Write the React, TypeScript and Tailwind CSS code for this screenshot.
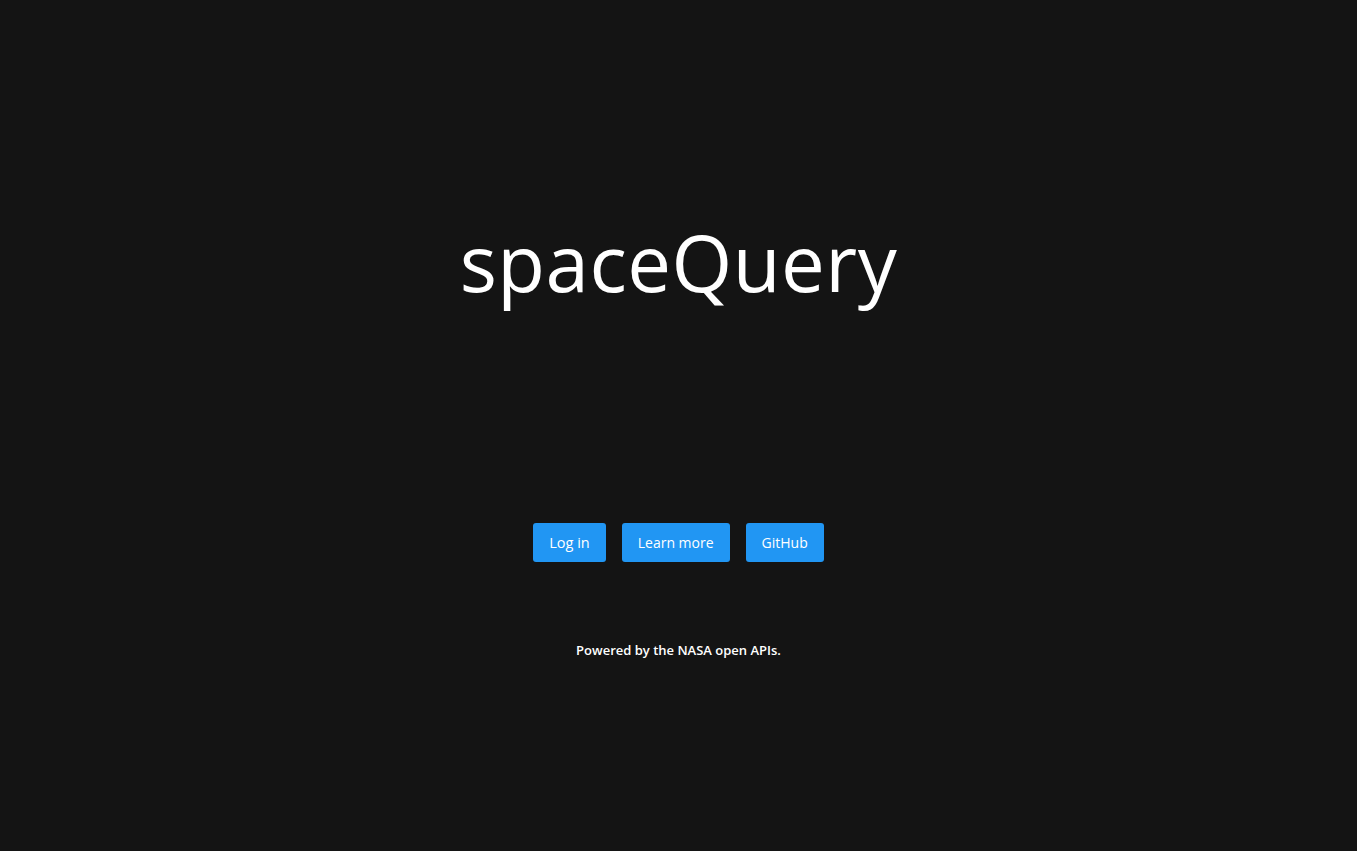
export default function App() {
  return (
    <div
      className="w-full h-[851px] bg-[#141414] flex flex-col items-center text-white"
      style={{ fontFamily: '"Open Sans", "Noto Sans", sans-serif' }}
    >
      <h1 className="mt-[212px] text-[78px] leading-[100px] font-normal tracking-[0.5px]">spaceQuery</h1>
      <div className="mt-[211px] flex gap-4">
        <button className="h-[39px] px-4 rounded-[3px] bg-[#2196f3] text-[14.5px] text-white">Log in</button>
        <button className="h-[39px] px-4 rounded-[3px] bg-[#2196f3] text-[14px] text-white">Learn more</button>
        <button className="h-[39px] px-4 rounded-[3px] bg-[#2196f3] text-[14px] text-white">GitHub</button>
      </div>
      <p className="mt-[79px] text-[13px] font-semibold">Powered by the NASA open APIs.</p>
    </div>
  );
}
